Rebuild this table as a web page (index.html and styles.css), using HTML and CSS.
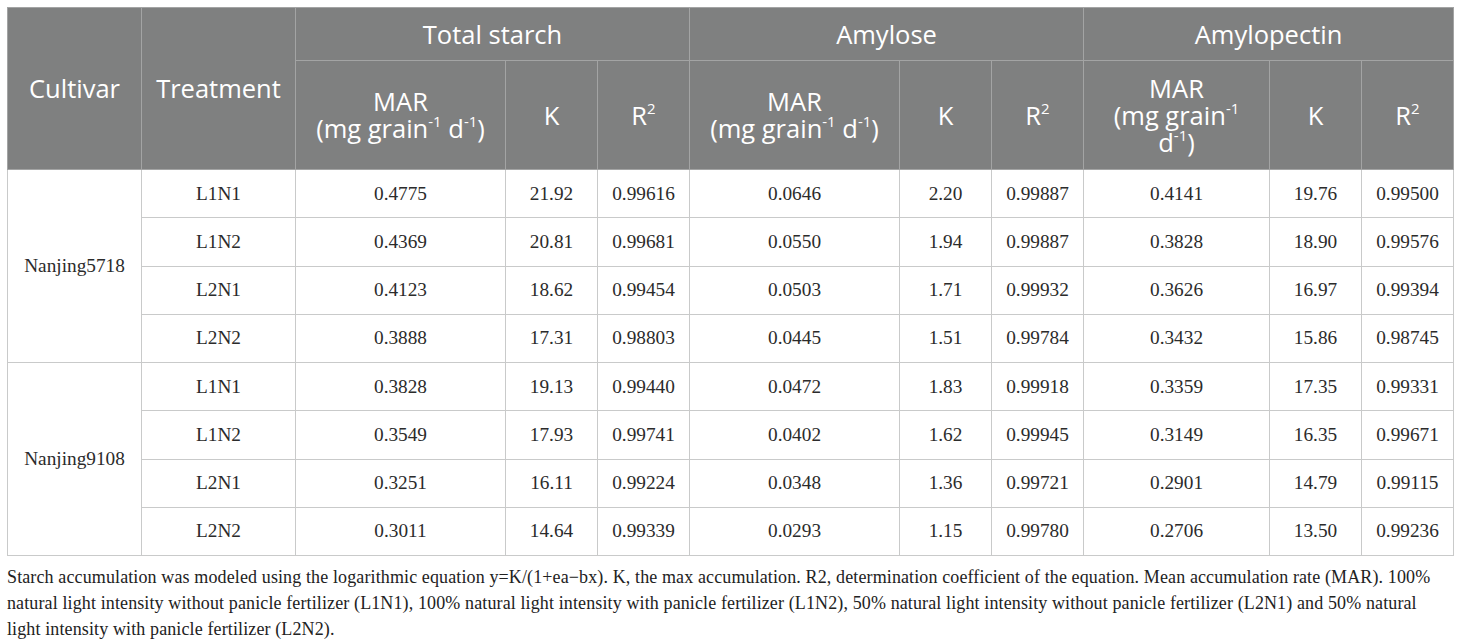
FILE: index.html
```html
<!DOCTYPE html>
<html lang="en">
<head>
    <meta charset="UTF-8">
    <title>Starch accumulation parameters</title>
    <link rel="stylesheet" href="styles.css">
</head>
<body>
    <div class="table-wrap">
        <table class="data-table">
            <colgroup>
                <col class="c-cultivar">
                <col class="c-treatment">
                <col class="c-mar">
                <col class="c-k">
                <col class="c-r2">
                <col class="c-mar">
                <col class="c-k">
                <col class="c-r2">
                <col class="c-mar2">
                <col class="c-k">
                <col class="c-r2">
            </colgroup>
            <thead>
                <tr class="head-top">
                    <th rowspan="2">Cultivar</th>
                    <th rowspan="2">Treatment</th>
                    <th colspan="3">Total starch</th>
                    <th colspan="3">Amylose</th>
                    <th colspan="3">Amylopectin</th>
                </tr>
                <tr class="head-sub">
                    <th>MAR<br>(mg grain<sup>-1</sup> d<sup>-1</sup>)</th>
                    <th>K</th>
                    <th>R<sup>2</sup></th>
                    <th>MAR<br>(mg grain<sup>-1</sup> d<sup>-1</sup>)</th>
                    <th>K</th>
                    <th>R<sup>2</sup></th>
                    <th>MAR<br>(mg grain<sup>-1</sup><br>d<sup>-1</sup>)</th>
                    <th>K</th>
                    <th>R<sup>2</sup></th>
                </tr>
            </thead>
            <tbody>
                <tr>
                    <td rowspan="4">Nanjing5718</td>
                    <td>L1N1</td><td>0.4775</td><td>21.92</td><td>0.99616</td>
                    <td>0.0646</td><td>2.20</td><td>0.99887</td>
                    <td>0.4141</td><td>19.76</td><td>0.99500</td>
                </tr>
                <tr>
                    <td>L1N2</td><td>0.4369</td><td>20.81</td><td>0.99681</td>
                    <td>0.0550</td><td>1.94</td><td>0.99887</td>
                    <td>0.3828</td><td>18.90</td><td>0.99576</td>
                </tr>
                <tr>
                    <td>L2N1</td><td>0.4123</td><td>18.62</td><td>0.99454</td>
                    <td>0.0503</td><td>1.71</td><td>0.99932</td>
                    <td>0.3626</td><td>16.97</td><td>0.99394</td>
                </tr>
                <tr>
                    <td>L2N2</td><td>0.3888</td><td>17.31</td><td>0.98803</td>
                    <td>0.0445</td><td>1.51</td><td>0.99784</td>
                    <td>0.3432</td><td>15.86</td><td>0.98745</td>
                </tr>
                <tr>
                    <td rowspan="4">Nanjing9108</td>
                    <td>L1N1</td><td>0.3828</td><td>19.13</td><td>0.99440</td>
                    <td>0.0472</td><td>1.83</td><td>0.99918</td>
                    <td>0.3359</td><td>17.35</td><td>0.99331</td>
                </tr>
                <tr>
                    <td>L1N2</td><td>0.3549</td><td>17.93</td><td>0.99741</td>
                    <td>0.0402</td><td>1.62</td><td>0.99945</td>
                    <td>0.3149</td><td>16.35</td><td>0.99671</td>
                </tr>
                <tr>
                    <td>L2N1</td><td>0.3251</td><td>16.11</td><td>0.99224</td>
                    <td>0.0348</td><td>1.36</td><td>0.99721</td>
                    <td>0.2901</td><td>14.79</td><td>0.99115</td>
                </tr>
                <tr>
                    <td>L2N2</td><td>0.3011</td><td>14.64</td><td>0.99339</td>
                    <td>0.0293</td><td>1.15</td><td>0.99780</td>
                    <td>0.2706</td><td>13.50</td><td>0.99236</td>
                </tr>
            </tbody>
        </table>
        <p class="table-note">Starch accumulation was modeled using the logarithmic equation y=K/(1+ea&minus;bx). K, the max accumulation. R2, determination coefficient of the equation. Mean accumulation rate (MAR). 100% natural light intensity without panicle fertilizer (L1N1), 100% natural light intensity with panicle fertilizer (L1N2), 50% natural light intensity without panicle fertilizer (L2N1) and 50% natural light intensity with panicle fertilizer (L2N2).</p>
    </div>
</body>
</html>
```

FILE: styles.css
```css
:root {
    --head-bg: #7f8080;
    --head-line: #a3a4a4;
    --body-line: #c9caca;
    --text: #2b2b2b;
}

* {
    margin: 0;
    padding: 0;
    box-sizing: border-box;
}

body {
    background: #ffffff;
    color: var(--text);
    font-family: "Liberation Serif", "Times New Roman", serif;
}

.table-wrap {
    width: 1460px;
    padding: 7px 8px 0 7px;
}

.data-table {
    width: 1445px;
    border-collapse: collapse;
    table-layout: fixed;
}

.c-cultivar { width: 134px; }
.c-treatment { width: 154px; }
.c-mar { width: 210px; }
.c-mar2 { width: 186px; }
.c-k { width: 92px; }
.c-r2 { width: 92px; }

.data-table th {
    background: var(--head-bg);
    color: #ffffff;
    font-family: "Open Sans", "Noto Sans", sans-serif;
    font-weight: 400;
    font-size: 25.5px;
    line-height: 27px;
    border: 1px solid var(--head-line);
    text-align: center;
    vertical-align: middle;
}

.data-table th sup {
    font-size: 15px;
    line-height: 0;
    vertical-align: 11px;
}

.head-top th {
    height: 53px;
}

.head-sub th {
    height: 109px;
}

.data-table td {
    border: 1px solid var(--body-line);
    text-align: center;
    vertical-align: middle;
    font-size: 19.3px;
    height: 48.25px;
}

.table-note {
    font-size: 18px;
    letter-spacing: 0.12px;
    line-height: 26px;
    color: #222222;
    padding-top: 8px;
}
```
